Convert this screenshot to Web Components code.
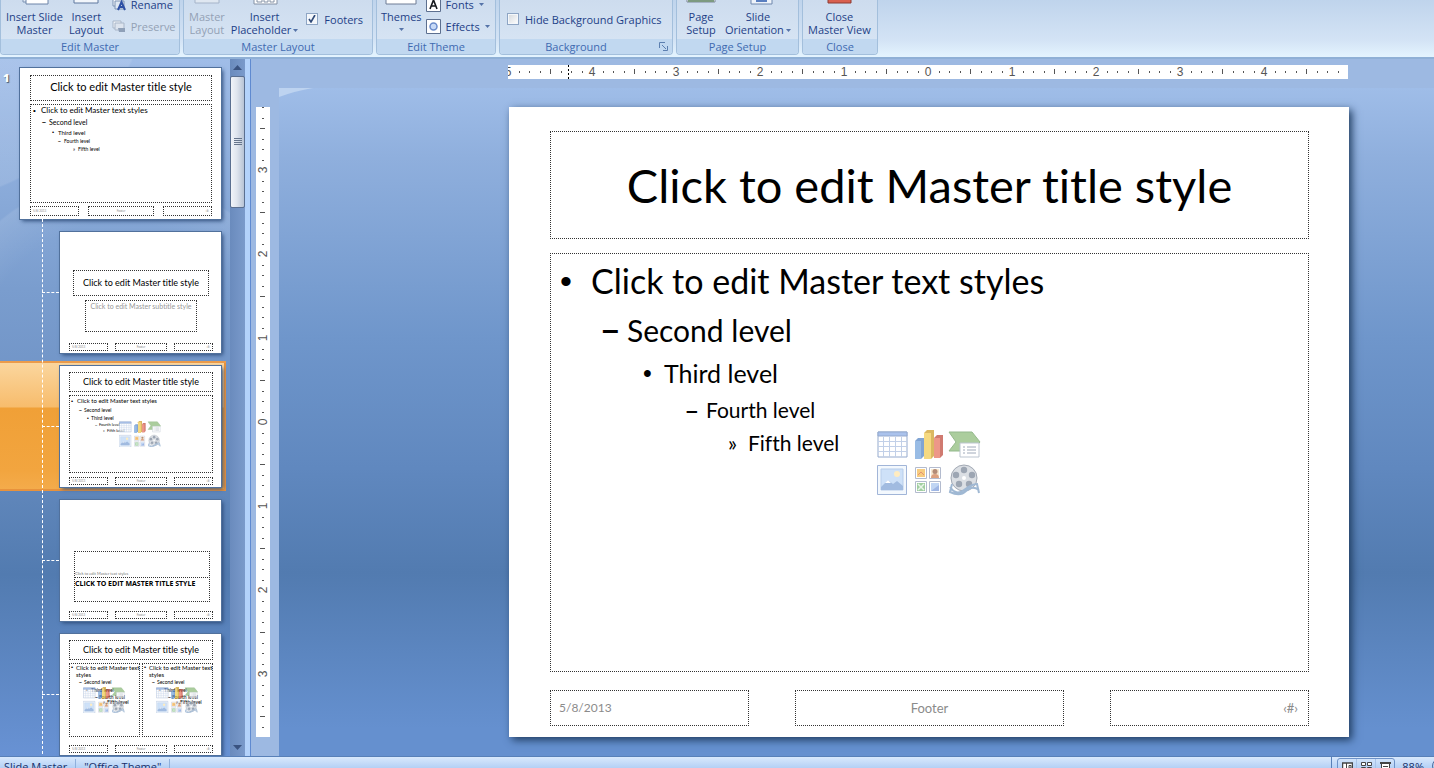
<!DOCTYPE html>
<html lang="en">
<head>
<meta charset="utf-8">
<title>Slide Master</title>
<style>
  html, body { margin: 0; height: 100%; overflow: hidden; }
  body { font-family: "Open Sans", "Noto Sans", sans-serif; font-size: 11px; color: #1e3f87; font-variant-ligatures: none; }
</style>
</head>
<body>
<master-app></master-app>

<script>
const define = (name, html, setup) => {
  const template = document.createElement('template');
  template.innerHTML = html;
  customElements.define(name, class extends HTMLElement {
    connectedCallback() {
      if (this.shadowRoot) return;
      const root = this.attachShadow({ mode: 'open' });
      root.append(template.content.cloneNode(true));
      if (setup) setup(this, root);
    }
  });
};

/* ---------- ribbon ---------- */
define('ribbon-group', `
  <style>
    :host { display: flex; flex-direction: column; justify-content: flex-end; box-sizing: border-box; height: 100%;
      width: var(--w); border: 1px solid #a3bfdc; border-top: 0; border-radius: 0 0 4px 4px; overflow: hidden;
      background: linear-gradient(#cddcee, #d9e6f5); flex: none; }
    .items { display: flex; align-items: flex-end; height: 39px; flex: none; }
    .label { position: relative; height: 15px; line-height: 15px; text-align: center; color: #3f6ab0;
      background: #c1d8f0; flex: none; }
    svg { position: absolute; right: 4px; top: 3px; }
    :host([launcher]) .label { padding-right: 20px; }
    :host(:not([launcher])) svg { display: none; }
  </style>
  <div class="items"><slot></slot></div>
  <div class="label"><span></span>
    <svg width="9" height="9" fill="none" stroke="#5c7fb0"><path d="M.5 6V.5H6M3 3.500H4M8.500 4V8.500H4M4 4L7 7"/></svg>
  </div>`,
  (el, root) => {
    root.querySelector('span').textContent = el.getAttribute('label');
    el.style.setProperty('--w', el.getAttribute('width') + 'px');
  });

const arrow = '<svg class="arrow" width="5" height="3"><path d="M0 0H5L2.500 3Z" fill="#5573a8"/></svg>';

define('ribbon-button', `
  <style>
    :host { display: block; flex: none; }
    button { all: unset; display: flex; flex-direction: column; align-items: center; text-align: center;
      line-height: 13px; padding-bottom: 3px; color: inherit; }
    .text { white-space: pre; }
    .icon { height: 32px; margin-bottom: 5px; display: block; }
    .arrow { margin-left: 2px; vertical-align: 2px; }
    .arrow.wide { display: block; margin: 5px auto; }
    :host([disabled]) { color: #93a1b5; }
    ::slotted(svg) { display: block; }
  </style>
  <button><span class="icon"><slot></slot></span><span class="text"></span></button>`,
  (el, root) => {
    const text = root.querySelector('.text');
    text.textContent = el.getAttribute('label').replace('|', '\n');
    if (el.hasAttribute('disabled')) root.querySelector('button').disabled = true;
    if (el.hasAttribute('menu')) text.insertAdjacentHTML('beforeend',
      el.getAttribute('menu') === 'below' ? arrow.replace('arrow', 'arrow wide') : arrow);
  });

define('ribbon-row', `
  <style>
    :host { display: block; }
    button { all: unset; display: flex; align-items: center; gap: 5px; height: 22px; white-space: nowrap; color: inherit; }
    :host([disabled]) { color: #93a1b5; }
    ::slotted(svg) { display: block; }
  </style>
  <button><slot></slot><span></span></button>`,
  (el, root) => {
    root.querySelector('span').textContent = el.getAttribute('label');
    if (el.hasAttribute('disabled')) root.querySelector('button').disabled = true;
    if (el.hasAttribute('menu')) root.querySelector('button').insertAdjacentHTML('beforeend', arrow);
  });

define('ribbon-check', `
  <style>
    :host { display: block; height: 30px; }
    label { display: flex; align-items: center; gap: 6px; height: 20px; white-space: nowrap; }
    input { appearance: none; margin: 0; width: 12px; height: 12px; border: 1px solid #8ea5c4;
      background: linear-gradient(135deg, #d4d8dd, #fff); box-shadow: inset 0 0 0 1px #f4f7fb; }
    input:checked { background: url("data:image/svg+xml,%3Csvg xmlns='http://www.w3.org/2000/svg' viewBox='0 0 10 10'%3E%3Cpath d='M2 5l2 3 4-7' fill='none' stroke='%23304a78' stroke-width='1.600'/%3E%3C/svg%3E") #f3f6fa; }
  </style>
  <label><input type="checkbox"><span></span></label>`,
  (el, root) => {
    root.querySelector('span').textContent = el.getAttribute('label');
    root.querySelector('input').checked = el.hasAttribute('checked');
  });

define('ribbon-bar', `
  <style>
    :host { display: block; height: 59px; flex: none; box-sizing: border-box; overflow: hidden;
      background: linear-gradient(#bfd4ec, #d3e3f5 40px, #e3f3fe 56px); border-bottom: 2px solid #8fb0d6; }
    nav { display: flex; gap: 3px; height: 55px; }
    .rows { display: flex; flex-direction: column; height: 44px; padding-bottom: 2px; }
  </style>
  <nav aria-label="Slide Master">
    <ribbon-group label="Edit Master" width="180">
      <ribbon-button label="Insert Slide|Master" style="margin-left:5px">
        <svg width="32" height="32"><path d="M4 4H27V29H4Z" fill="#e4ecf6" stroke="#7d93b3"/><path d="M7 10H29V31H7Z" fill="#fff" stroke="#6d84a8"/></svg>
      </ribbon-button>
      <ribbon-button label="Insert|Layout" style="margin-left:6px">
        <svg width="32" height="32"><path d="M4 4H28V30H4Z" fill="#f2f6fb" stroke="#5f789f"/></svg>
      </ribbon-button>
      <div class="rows" style="margin-left:8px">
        <ribbon-row label="Rename">
          <svg width="14" height="14"><path d="M1 1H10V9H1Z" fill="#f5f8fc" stroke="#7d93b3"/><path d="M3 4H12V12H3Z" fill="#dfe8f3" stroke="#7d93b3"/><path d="M6 13L9.500 5L13 13M7 10H12" fill="none" stroke="#2d50a5" stroke-width="2"/></svg>
        </ribbon-row>
        <ribbon-row label="Preserve" disabled>
          <svg width="14" height="14"><path d="M1 2H9V9H1Z" fill="#eef2f7" stroke="#a9b6c8"/><path d="M3 4H12V11H3Z" fill="#dde4ee" stroke="#a9b6c8"/><path d="M6 9H13V13H7Z" fill="#8fa0b8"/></svg>
        </ribbon-row>
      </div>
    </ribbon-group>
    <ribbon-group label="Master Layout" width="190">
      <ribbon-button label="Master|Layout" disabled style="margin-left:5px">
        <svg width="32" height="32"><path d="M4 4H28V30H4Z" fill="#dfe7f1" stroke="#a5b4c9"/></svg>
      </ribbon-button>
      <ribbon-button label="Insert|Placeholder" menu style="margin-left:6px">
        <svg width="32" height="32"><path d="M5 2H28V31H5Z" fill="#fff" stroke="#8391a5"/><path d="M8 24H13V29H8ZM15 24H19V29H15ZM21 24H25V29H21Z" fill="#fff" stroke="#8391a5"/></svg>
      </ribbon-button>
      <ribbon-check label="Footers" checked style="margin-left:8px"></ribbon-check>
    </ribbon-group>
    <ribbon-group label="Edit Theme" width="120">
      <ribbon-button label="Themes" menu="below" style="margin-left:4px">
        <svg width="32" height="32"><path d="M1 1H31V31H1Z" fill="#fff" stroke="#6e7d95"/><path d="M4 26H28" stroke="#b56b3c" stroke-width="2" stroke-dasharray="3 1"/></svg>
      </ribbon-button>
      <div class="rows" style="margin-left:4px">
        <ribbon-row label="Fonts" menu>
          <svg width="15" height="15"><path d="M.5 .5H14.500V14.500H.5Z" fill="#fff" stroke="#5c6f8f"/><path d="M4 12L7.500 3L11 12M5 9H10" fill="none" stroke="#16181c" stroke-width="1.600"/></svg>
        </ribbon-row>
        <ribbon-row label="Effects" menu>
          <svg width="15" height="15"><path d="M.5 .5H14.500V14.500H.5Z" fill="#fff" stroke="#5c6f8f"/><circle cx="7.500" cy="7.500" r="3.500" fill="#c6d9f7" stroke="#6b8ccb" stroke-width="1.500"/></svg>
        </ribbon-row>
      </div>
    </ribbon-group>
    <ribbon-group label="Background" width="174" launcher>
      <ribbon-check label="Hide Background Graphics" style="margin-left:7px"></ribbon-check>
    </ribbon-group>
    <ribbon-group label="Page Setup" width="123">
      <ribbon-button label="Page|Setup" style="margin-left:8px">
        <svg width="32" height="32"><path d="M2 2H30V29H2Z" fill="#fff" stroke="#7c8798"/><path d="M3 28H29" stroke="#7d9a80" stroke-width="2"/></svg>
      </ribbon-button>
      <ribbon-button label="Slide|Orientation" menu style="margin-left:8px">
        <svg width="32" height="32"><path d="M9 2H30V31H9Z" fill="#eef3fa" stroke="#6f87ad"/><path d="M14 28H24L24 24" fill="none" stroke="#5a7fc0" stroke-width="2"/></svg>
      </ribbon-button>
    </ribbon-group>
    <ribbon-group label="Close" width="76">
      <ribbon-button label="Close|Master View" style="margin-left:5px">
        <svg width="32" height="32"><path d="M5 4H28V30H5Z" fill="#d9604f" stroke="#8c3a33"/></svg>
      </ribbon-button>
    </ribbon-group>
  </nav>`);

/* ---------- slide parts ---------- */
define('place-holder', `
  <style>
    :host { display: flex; box-sizing: border-box; border: 1px dotted #333; position: relative; min-width: 0; min-height: 0; }
  </style><slot></slot>`);

/* Each level: font size, row height, text indent, bullet offset before the text. */
const outlineSizes = {
  large:  [[34,50,40,31],[30,48,76,25],[25,38,113,21],[21,36,155,20],[21,30,197,20]],
  medium: [[8,11,10,8],[7,12,18,7],[6,9,27,6],[5,8,33,6],[5,8,47,5]],
  small:  [[6,10,7,6],[5,9,14,5],[5,7,21,4],[4,6,29,4],[4,6,37,4]],
  tiny:   [[6,7,6,5],[5,9,14,5],[5,7,21,5],[5,6,29,4],[5,5,37,4]]
};
define('outline-text', `
  <style>
    :host { display: block; color: #000; flex: 1; min-width: 0; }
    ul { list-style: none; margin: 0; padding: 0; }
    :host([size=large]) ul { padding-top: 2px; }
    li { display: flex; white-space: pre; }
    i { font-style: normal; flex: none; }
    .dot, .dash { font-family: "Liberation Sans", sans-serif; }
    .dash { font-weight: 700; }
  </style><ul></ul>`,
  (el, root) => {
    const size = el.getAttribute('size');
    const texts = ['Click to edit Master text' + (size === 'tiny' ? '\n' : ' ') + 'styles',
      'Second level', 'Third level', 'Fourth level', 'Fifth level'];
    const marks = [['•', 'dot'], ['–', 'dash'], ['•', 'dot'], ['–', 'dash'], ['»', '']];
    root.querySelector('ul').innerHTML = outlineSizes[size].map(([fs, lh, x, b], i) =>
      `<li style="font-size:${fs}px;line-height:${lh}px;padding-left:${x - b}px"><i class="${marks[i][1]}" style="width:${b}px">${marks[i][0]}</i><span>${texts[i]}</span></li>`).join('');
  });

define('content-icons', `
  <style>
    :host { position: absolute; inset: 0 2px 0 0; display: flex; align-items: center; justify-content: center; opacity: .65; }
    svg { width: var(--icons, 42px); display: block; }
  </style>
  <svg viewBox="0 0 104 66">
    <path d="M1 2H30V27H1Z" fill="#fff" stroke="#5f7fb5"/><path d="M1 2H30V6H1Z" fill="#7da2e2" stroke="#5f7fb5"/>
    <path d="M1 11.500H30M1 16.500H30M1 21.500H30M6.500 7V27M12.500 7V27M18.500 7V27M24.500 7V27" stroke="#a3b8dc" fill="none"/>
    <path d="M38 11L41 8H47V26L44 29H38Z" fill="#3f74bd"/><path d="M38 11H44V29H38Z" fill="#6499d8"/>
    <path d="M47 3L50 0H57V26L54 29H47Z" fill="#c8930f"/><path d="M47 3H54V29H47Z" fill="#f0c53f"/>
    <path d="M57 8L60 5H66V25L63 28H57Z" fill="#b83424"/><path d="M57 8H63V28H57Z" fill="#e4604a"/>
    <path d="M72 2H95L103 12L95 21H72L79 12Z" fill="#7fb36a" stroke="#5d9550"/>
    <path d="M83 13H102V27H83Z" fill="#fff" stroke="#9aa7b8"/><path d="M86 17H88M90 17H99M86 20H88M90 20H99M86 23H88M90 23H99" stroke="#6f7f96" fill="none"/>
    <path d="M.5 35.500H29.500V64.500H.5Z" fill="#eef5fd" stroke="#6f8fc4"/><path d="M4 39H26V60H4Z" fill="#b4d2f5" stroke="#93b4e0"/>
    <circle cx="20" cy="44" r="3" fill="#ffe3a0"/><path d="M4 57L11 50L16 54L20 51L26 56V60H4Z" fill="#6f97d0"/><path d="M8 53L11 50L14 53Z" fill="#fff"/>
    <path d="M38.500 37.500H49.500V48.500H38.500ZM52.500 37.500H63.500V48.500H52.500ZM38.500 51.500H49.500V62.500H38.500ZM52.500 51.500H63.500V62.500H52.500Z" fill="#fff" stroke="#8c97b5"/>
    <path d="M40 39H48V47H40Z" fill="#f4b13c"/><path d="M41 45L44 42L47 45" stroke="#d65a28" fill="none"/>
    <path d="M54 39H62V47H54Z" fill="#f3dcb8"/><circle cx="58" cy="41.500" r="2.500" fill="#8a4e2e"/><path d="M54 48Q54 44 58 44Q62 44 62 48Z" fill="#c96f3d"/>
    <path d="M40 53H48V61H40Z" fill="#6fb56f"/><path d="M41 54L47 60M47 54L41 60" stroke="#dff0df" stroke-width="1.500"/>
    <path d="M54 53H62V61H54Z" fill="#9fc0ee"/><path d="M54 61L62 55V61Z" fill="#6d90d6"/>
    <circle cx="87" cy="48" r="13" fill="#c9ced6" stroke="#717c8d"/>
    <g fill="#69778c"><circle cx="87" cy="40" r="3.200"/><circle cx="95" cy="45" r="3.200"/><circle cx="92" cy="54" r="3.200"/><circle cx="82" cy="54" r="3.200"/><circle cx="79" cy="45" r="3.200"/></g>
    <circle cx="87" cy="48" r="2" fill="#fff"/>
    <path d="M73 57Q79 66 87 60T100 54L102 63M75 54L73 62Q83 67 89 61T102 60" fill="none" stroke="#6d93bd" stroke-width="2"/>
  </svg>`);

define('slide-footer', `
  <style>
    :host { display: flex; justify-content: space-between; flex: none; color: #8b8b8b; font-size: 3px; line-height: 5px; height: 10px; }
    place-holder { align-items: center; }
    .date, .num { padding: 0 2px; }
    .date { justify-content: flex-start; } .foot { justify-content: center; } .num { justify-content: flex-end; }
    .side { width: 27%; } .foot { width: 36%; }
    :host([large]) { font-size: 12px; line-height: 16px; height: 36px; }
    :host([large]) .side { width: 199px; } :host([large]) .foot { width: 269px; font-size: 13px; }
    :host([large]) .date { padding-left: 8px; } :host([large]) .num { padding-right: 10px; font-size: 13px; }
  </style>
  <place-holder class="side date"><span>5/8/2013</span></place-holder>
  <place-holder class="foot"><span>Footer</span></place-holder>
  <place-holder class="side num"><span>‹#›</span></place-holder>`);

define('slide-page', `
  <style>
    :host { display: flex; flex-direction: column; box-sizing: border-box; background: #fff; color: #000;
      font-family: Lato, "Open Sans", sans-serif; }
    .title { justify-content: center; align-items: center; white-space: nowrap; flex: none; }
    .body { flex: 1; }
    .cols { display: flex; flex: 1; gap: 2px; min-height: 0; }
    slide-footer { flex: none; }

    :host([kind=editor]) { padding: 24px 40px 11px 41px; aspect-ratio: 4 / 3; --icons: 104px; box-shadow: 3px 3px 8px #1f3c60; }
    :host([kind=editor]) .title { height: 108px; font-size: 47px; margin-bottom: 14px; }
    :host([kind=editor]) .body { margin-bottom: 18px; }

    :host([kind=master]) { width: 201px; height: 151px; padding: 7px 9px 3px 10px; }
    :host([kind=master]) .title { height: 26px; font-size: 11px; line-height: 12px; margin-bottom: 3px; padding-bottom: 2px; }
    :host([kind=master]) .body { margin-bottom: 3px; }

    :host([layout]) { width: 161px; height: 121px; padding: 6px 8px 2px 9px; font-size: 9px; line-height: 10px; }
    :host([layout]) .title { height: 20px; margin-bottom: 3px; }
    :host([layout]) .body, .cols { margin-bottom: 4px; }
    :host([layout]) slide-footer { height: 8px; }
    :host([thumb]), :host([layout]) { box-shadow: 0 0 0 1px #51719c, 2px 2px 4px #2c4b78; }

    :host([kind=cover]) .title { height: 26px; margin: 32px 4px 4px; }
    .subtitle { height: 32px; margin: 0 16px auto; justify-content: center; font-size: 7px; line-height: 10px; color: #999; white-space: nowrap; }
    .lead { height: 27px; margin: 45px 3px 0 5px; align-items: flex-end; font-size: 4px; line-height: 6px; color: #777; }
    .caps { height: 25px; margin: -1px 3px auto 5px; font-family: "Open Sans", sans-serif; font-size: 7px; line-height: 11px; font-weight: 700; white-space: nowrap; }
  </style><main style="display:contents"></main>`,
  (el, root) => {
    const kind = el.getAttribute('kind');
    const title = '<place-holder class="title"><span>Click to edit Master title style</span></place-holder>';
    const body = (size, icons = '<content-icons></content-icons>') =>
      `<place-holder class="body"><outline-text size="${size}"></outline-text>${icons}</place-holder>`;
    const views = {
      editor: title + body('large'),
      master: title + body('medium', ''),
      cover: title + '<place-holder class="subtitle"><span>Click to edit Master subtitle style</span></place-holder>',
      content: title + body('small'),
      section: '<place-holder class="lead"><span>Click to edit Master text styles</span></place-holder>' +
        '<place-holder class="caps"><span>CLICK TO EDIT MASTER TITLE STYLE</span></place-holder>',
      columns: title + `<div class="cols">${body('tiny')}${body('tiny')}</div>`
    };
    root.querySelector('main').innerHTML = views[kind] + `<slide-footer ${kind === 'editor' ? 'large' : ''}></slide-footer>`;
  });

/* ---------- outline pane ---------- */
define('outline-pane', `
  <style>
    :host { display: block; width: 230px; flex: none; overflow: hidden; box-sizing: border-box; padding-top: 9px;
      background:
        radial-gradient(circle at -90px -98px, #ffffff1c 0 242px, transparent 244px),
        radial-gradient(circle at 120px 304px, transparent 0 140px, #ffffff18 185px, transparent 187px) 0 0 / 100% 230px no-repeat,
        linear-gradient(#a0bde8, #8fafdd 100px, #7a9dce 230px, #6f93c6 340px, #527bb0 515px, #6892d4 697px); }
    .master { display: flex; }
    .no { width: 7px; padding: 2px 10px 0 3px; font-weight: 800; color: #fff; text-shadow: 1px 1px 1px #456; }
    ol { list-style: none; margin: 0; padding: 8px 0 0; position: relative; }
    ol::before { content: ""; position: absolute; left: 42px; top: 0; bottom: 0; border-left: 1px dashed #fff; z-index: 1; }
    li { position: relative; height: 122px; margin-bottom: 4px; padding: 5px 0 3px 60px; width: 166px; }
    li::before { content: ""; position: absolute; left: 42px; top: 65px; width: 17px; border-top: 1px dashed #fff; }
    li.on { background: linear-gradient(#fbd7a0, #f7bc6c 46px, #f0a037 47px, #f2a53f 110px, #f4ac4c);
      box-shadow: inset 0 2px #eb9b4b, inset -2px -2px #e8923c; }
  </style>
  <div class="master"><span class="no">1</span><slide-page kind="master" thumb></slide-page></div>
  <ol>
    <li><slide-page kind="cover" layout></slide-page></li>
    <li class="on"><slide-page kind="content" layout></slide-page></li>
    <li><slide-page kind="section" layout></slide-page></li>
    <li><slide-page kind="columns" layout></slide-page></li>
  </ol>`);

define('pane-scroll', `
  <style>
    :host { display: flex; flex-direction: column; width: 15px; flex: none; background: linear-gradient(90deg, #6a8bbd, #7a9acb);
      border-right: 5px solid #b3d2fb; box-shadow: 1px 0 #5f8ad0; margin-right: 1px; }
    button { all: unset; height: 17px; display: grid; place-items: center; flex: none; }
    .grip { height: 132px; box-sizing: border-box; border: 1px solid #5a6f90; border-radius: 2px; flex: none;
      background: linear-gradient(90deg, #f1f4f9, #dfe5ee 45%, #b7c3d5); display: grid; place-items: center; }
    .gap { flex: 1; }
  </style>
  <button aria-label="Scroll up"><svg width="9" height="5"><path d="M0 5L4.500 0L9 5Z" fill="#3a5380"/></svg></button>
  <div class="grip"><svg width="8" height="8"><path d="M0 .5H8M0 2.500H8M0 4.500H8M0 6.500H8" stroke="#66758c"/></svg></div>
  <div class="gap"></div>
  <button aria-label="Scroll down"><svg width="9" height="5"><path d="M0 0L4.500 5L9 0Z" fill="#3a5380"/></svg></button>`);

/* ---------- rulers ---------- */
define('ruler-strip', `
  <style>
    :host { display: block; background: #fff; overflow: hidden; }
    svg { display: block; overflow: visible; font: 12px "Liberation Sans", sans-serif; }
    text { text-anchor: middle; fill: #555; }
  </style>`,
  (el, root) => {
    const vertical = el.hasAttribute('vertical');
    const length = vertical ? 630 : 840, middle = length / 2;
    let marks = '';
    for (let k = -40; k <= 40; k++) {
      const p = Math.round(middle + k * 10.5);
      if (p < 0 || p > length) continue;
      if (k % 8 === 0) {
        if (k === 40) continue;
        marks += vertical ? `<text transform="translate(11 ${p}) rotate(-90)">${Math.abs(k / 8)}</text>`
                          : `<text x="${p}" y="11">${Math.abs(k / 8)}</text>`;
      } else {
        const half = k % 4 === 0, a = half ? 4 : 6, l = half ? 5 : 2;
        marks += vertical ? `<path d="M${a} ${p}h${l}v1h-${l}z"/>` : `<path d="M${p} ${a}v${l}h1v-${l}z"/>`;
      }
    }
    if (!vertical) marks += '<path d="M60.500 0V14" stroke="#000" stroke-dasharray="2 2"/>';
    root.innerHTML += `<svg width="${vertical ? 14 : length}" height="${vertical ? length : 14}" fill="#555">${marks}</svg>`;
  });

/* ---------- status bar ---------- */
define('status-bar', `
  <style>
    :host { display: block; flex: 0 0 12px; overflow: hidden; background: linear-gradient(#dcebfd, #b4d0f5 12px); box-shadow: inset 0 1px #5880b8; }
    footer { display: flex; align-items: center; height: 20px; color: #17306b; }
    span { padding: 0 8px; border-right: 1px solid #8fb0dc; }
    .mode { padding-left: 4px; }
    .fill { flex: 1; }
    .split { width: 1px; align-self: stretch; background: #5880b8; margin-right: 5px; }
    .views { display: flex; align-self: flex-start; height: 20px; margin-top: 2px; box-sizing: border-box; border: 1px solid #6d92c8; border-radius: 3px; }
    button { all: unset; width: 18px; display: flex; justify-content: center; padding-top: 3px; }
    button + button { border-left: 1px solid #a9c3e8; }
    output { padding: 0 8px 0 7px; }
    .knob { flex: none; width: 14px; height: 14px; border: 1px solid #4a6a9c; border-radius: 50%; margin-right: -14px; }
  </style>
  <footer>
    <span class="mode">Slide Master</span><span>"Office Theme"</span>
    <div class="fill"></div><div class="split"></div>
    <div class="views">
      <button aria-label="Normal"><svg width="11" height="10" fill="#fff" stroke="#444"><path d="M.5 1H10.500V9.500H.5Z" stroke-width="1.500"/><path d="M4.500 1V9M7 3.500H9V6H7Z"/></svg></button>
      <button aria-label="Slide sorter"><svg width="11" height="10" fill="#fff" stroke="#444"><path d="M.5 .5H4.500V3.500H.5ZM6.500 .5H10.500V3.500H6.500ZM.5 5.500H4.500V8.500H.5ZM6.500 5.500H10.500V8.500H6.500Z"/></svg></button>
      <button aria-label="Slide show"><svg width="11" height="10" fill="#fff" stroke="#444"><path d="M0 1H11" stroke-width="2"/><path d="M1.500 2V7.500H9.500V2M3 4.500H8"/></svg></button>
    </div>
    <output>88%</output><div class="knob"></div>
  </footer>`);

/* ---------- application frame ---------- */
define('master-app', `
  <style>
    :host { display: flex; flex-direction: column; height: 100vh; background: #9db9e2; }
    .work { display: flex; flex: 1; min-height: 0; overflow: hidden; }
    .side { width: 28px; flex: none; padding: 48px 0 0 5px; box-sizing: border-box; }
    .side ruler-strip { width: 14px; height: 630px; }
    .edit { flex: 1; min-width: 0; display: flex; flex-direction: column; }
    .top { padding: 6px 86px 9px 229px; }
    .stage { position: relative; flex: 1; padding: 19px 85px 19px 230px;
      background: linear-gradient(#9fbde8, #8fafdd 70px, #6f96cb 250px, #6088bf 380px, #527bb0 485px, #6590cf 640px); }
    .stage > svg { position: absolute; left: 0; top: 0; }
  </style>
  <ribbon-bar></ribbon-bar>
  <div class="work">
    <outline-pane></outline-pane>
    <pane-scroll></pane-scroll>
    <div class="side"><ruler-strip vertical></ruler-strip></div>
    <div class="edit">
      <div class="top"><ruler-strip></ruler-strip></div>
      <div class="stage">
        <svg width="34" height="9"><path d="M0 0H34Q16 3 0 9Z" fill="#bdd3f0"/></svg>
        <slide-page kind="editor"></slide-page>
      </div>
    </div>
  </div>
  <status-bar></status-bar>`);
</script>
</body>
</html>
